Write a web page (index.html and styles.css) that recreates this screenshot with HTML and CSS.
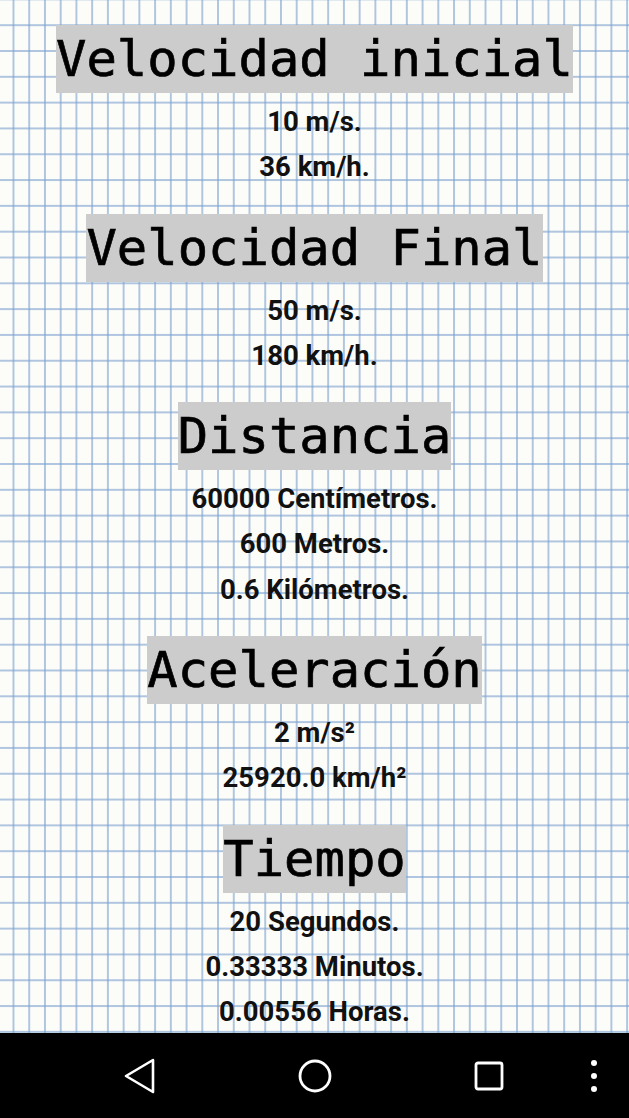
FILE: index.html
```html
<!DOCTYPE html>
<html lang="es">
<head>
<meta charset="utf-8">
<title>Resultados</title>
<link rel="stylesheet" href="styles.css">
</head>
<body>
<div class="screen">
  <div class="content">
    <section class="block">
      <h2 class="title">Velocidad inicial</h2>
      <p class="value">10 m/s.</p>
      <p class="value">36 km/h.</p>
    </section>
    <section class="block">
      <h2 class="title">Velocidad Final</h2>
      <p class="value">50 m/s.</p>
      <p class="value">180 km/h.</p>
    </section>
    <section class="block">
      <h2 class="title">Distancia</h2>
      <p class="value">60000 Centímetros.</p>
      <p class="value">600 Metros.</p>
      <p class="value">0.6 Kilómetros.</p>
    </section>
    <section class="block">
      <h2 class="title">Aceleración</h2>
      <p class="value">2 m/s²</p>
      <p class="value">25920.0 km/h²</p>
    </section>
    <section class="block">
      <h2 class="title">Tiempo</h2>
      <p class="value">20 Segundos.</p>
      <p class="value">0.33333 Minutos.</p>
      <p class="value">0.00556 Horas.</p>
    </section>
  </div>
</div>
<nav class="navbar">
  <span class="nav-btn back">
    <svg width="40" height="40" viewBox="0 0 40 40"><path d="M33 4 L6 20 L33 36 Z" fill="none" stroke="#fff" stroke-width="2.6" stroke-linejoin="round"/></svg>
  </span>
  <span class="nav-btn home">
    <svg width="40" height="40" viewBox="0 0 40 40"><circle cx="20" cy="20" r="15" fill="none" stroke="#fff" stroke-width="2.8"/></svg>
  </span>
  <span class="nav-btn recents">
    <svg width="40" height="40" viewBox="0 0 40 40"><rect x="7" y="7" width="26" height="26" rx="2" fill="none" stroke="#fff" stroke-width="2.8"/></svg>
  </span>
  <span class="nav-btn menu">
    <svg width="12" height="40" viewBox="0 0 12 40"><circle cx="6" cy="7" r="3" fill="#fff"/><circle cx="6" cy="20" r="3" fill="#fff"/><circle cx="6" cy="33" r="3" fill="#fff"/></svg>
  </span>
</nav>
</body>
</html>
```

FILE: styles.css
```css
html, body {
  margin: 0;
  padding: 0;
  background: #000;
}

.screen {
  width: 629px;
  height: 1033px;
  overflow: hidden;
  background-color: #fcfdf9;
  background-image:
    linear-gradient(to right, rgba(128, 163, 208, 0.62) 1.6px, transparent 1.6px),
    linear-gradient(to bottom, rgba(128, 163, 208, 0.62) 1.6px, transparent 1.6px);
  background-size: 15.74px 100%, 100% 25.82px;
  background-position: 12.5px 0, 0 24.2px;
}

.content {
  padding-top: 25px;
  display: flex;
  flex-direction: column;
  align-items: center;
}

.block {
  display: flex;
  flex-direction: column;
  align-items: center;
  margin-bottom: 24px;
}

.title {
  margin: 0 0 6px 0;
  font-family: "DejaVu Sans Mono", monospace;
  font-weight: normal;
  font-size: 50.5px;
  line-height: 68px;
  height: 68px;
  background: #cccccc;
  color: #000;
  white-space: nowrap;
  -webkit-text-stroke: 0.7px #000;
}

.value {
  margin: 0;
  font-family: Roboto, "Liberation Sans", sans-serif;
  font-weight: 700;
  font-size: 27.5px;
  line-height: 45.3px;
  color: #111;
  white-space: nowrap;
}

.navbar {
  height: 85px;
  background: #000;
  display: flex;
  align-items: center;
}

.nav-btn {
  display: flex;
  align-items: center;
  justify-content: center;
}

.back {
  margin-left: 120px;
}

.home {
  margin-left: 135px;
}

.recents {
  margin-left: 134px;
}

.menu {
  margin-left: 79px;
}
```
